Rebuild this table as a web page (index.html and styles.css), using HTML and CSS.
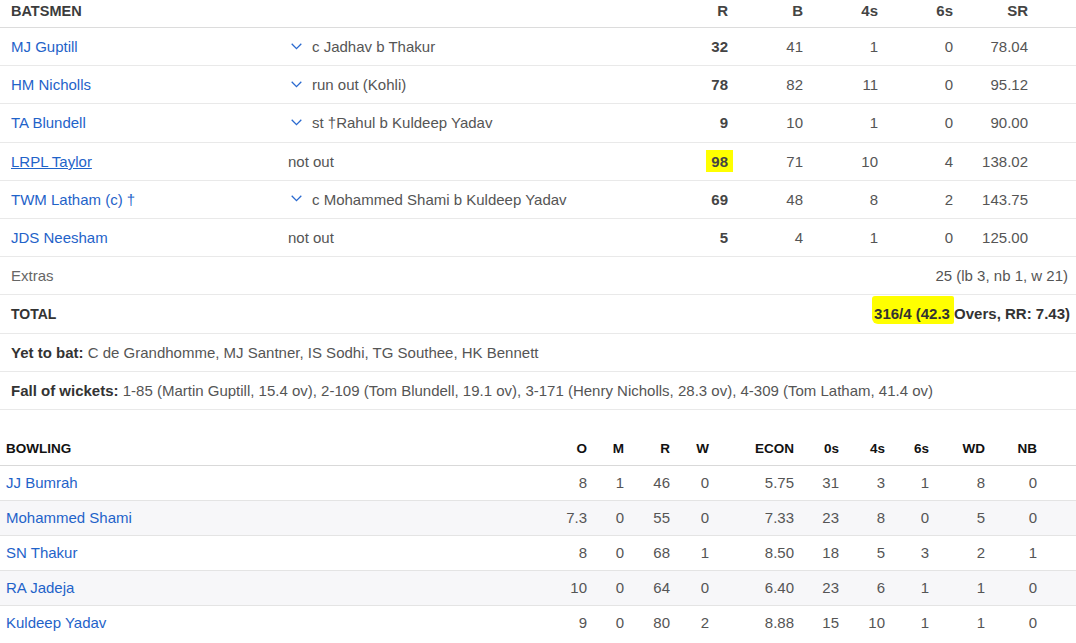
FILE: index.html
```html
<!DOCTYPE html>
<html lang="en">
<head>
<meta charset="utf-8">
<title>Scorecard</title>
<link rel="stylesheet" href="styles.css">
</head>
<body>
<section class="batting">
  <div class="bat-row bat-head">
    <div class="bat-title">BATSMEN</div>
    <div></div>
    <div class="num">R</div>
    <div class="num">B</div>
    <div class="num">4s</div>
    <div class="num">6s</div>
    <div class="num">SR</div>
  </div>

  <div class="bat-row">
    <a class="player" href="#">MJ Guptill</a>
    <div class="dismissal"><svg class="chev" width="11" height="7" viewBox="0 0 11 7"><path d="M0.7 0.8 L5.5 5.6 L10.3 0.8" fill="none" stroke="#2a6ad0" stroke-width="1.3"/></svg>c Jadhav b Thakur</div>
    <div class="num runs">32</div>
    <div class="num">41</div>
    <div class="num">1</div>
    <div class="num">0</div>
    <div class="num">78.04</div>
  </div>

  <div class="bat-row">
    <a class="player" href="#">HM Nicholls</a>
    <div class="dismissal"><svg class="chev" width="11" height="7" viewBox="0 0 11 7"><path d="M0.7 0.8 L5.5 5.6 L10.3 0.8" fill="none" stroke="#2a6ad0" stroke-width="1.3"/></svg>run out (Kohli)</div>
    <div class="num runs">78</div>
    <div class="num">82</div>
    <div class="num">11</div>
    <div class="num">0</div>
    <div class="num">95.12</div>
  </div>

  <div class="bat-row">
    <a class="player" href="#">TA Blundell</a>
    <div class="dismissal"><svg class="chev" width="11" height="7" viewBox="0 0 11 7"><path d="M0.7 0.8 L5.5 5.6 L10.3 0.8" fill="none" stroke="#2a6ad0" stroke-width="1.3"/></svg>st †Rahul b Kuldeep Yadav</div>
    <div class="num runs">9</div>
    <div class="num">10</div>
    <div class="num">1</div>
    <div class="num">0</div>
    <div class="num">90.00</div>
  </div>

  <div class="bat-row">
    <a class="player hover" href="#">LRPL Taylor</a>
    <div class="dismissal">not out</div>
    <div class="num runs"><span class="hl">98</span></div>
    <div class="num">71</div>
    <div class="num">10</div>
    <div class="num">4</div>
    <div class="num">138.02</div>
  </div>

  <div class="bat-row">
    <a class="player" href="#">TWM Latham (c) †</a>
    <div class="dismissal"><svg class="chev" width="11" height="7" viewBox="0 0 11 7"><path d="M0.7 0.8 L5.5 5.6 L10.3 0.8" fill="none" stroke="#2a6ad0" stroke-width="1.3"/></svg>c Mohammed Shami b Kuldeep Yadav</div>
    <div class="num runs">69</div>
    <div class="num">48</div>
    <div class="num">8</div>
    <div class="num">2</div>
    <div class="num">143.75</div>
  </div>

  <div class="bat-row">
    <a class="player" href="#">JDS Neesham</a>
    <div class="dismissal">not out</div>
    <div class="num runs">5</div>
    <div class="num">4</div>
    <div class="num">1</div>
    <div class="num">0</div>
    <div class="num">125.00</div>
  </div>

  <div class="line-row extras">
    <div class="extras-label">Extras</div>
    <div class="extras-value">25 (lb 3, nb 1, w 21)</div>
  </div>

  <div class="line-row total">
    <div class="total-label">TOTAL</div>
    <div class="total-value"><span class="marker">316/4 (42.3 </span>Overs, RR: 7.43)</div>
  </div>

  <div class="line-row note">
    <div><b>Yet to bat:</b> C de Grandhomme, MJ Santner, IS Sodhi, TG Southee, HK Bennett</div>
  </div>

  <div class="line-row note">
    <div><b>Fall of wickets:</b> 1-85 (Martin Guptill, 15.4 ov), 2-109 (Tom Blundell, 19.1 ov), 3-171 (Henry Nicholls, 28.3 ov), 4-309 (Tom Latham, 41.4 ov)</div>
  </div>
</section>

<section class="bowling">
  <div class="bowl-row bowl-head">
    <div>BOWLING</div>
    <div class="num">O</div>
    <div class="num">M</div>
    <div class="num">R</div>
    <div class="num">W</div>
    <div class="num">ECON</div>
    <div class="num">0s</div>
    <div class="num">4s</div>
    <div class="num">6s</div>
    <div class="num">WD</div>
    <div class="num">NB</div>
  </div>

  <div class="bowl-row">
    <a class="player" href="#">JJ Bumrah</a>
    <div class="num">8</div><div class="num">1</div><div class="num">46</div><div class="num">0</div>
    <div class="num">5.75</div><div class="num">31</div><div class="num">3</div><div class="num">1</div>
    <div class="num">8</div><div class="num">0</div>
  </div>

  <div class="bowl-row stripe">
    <a class="player" href="#">Mohammed Shami</a>
    <div class="num">7.3</div><div class="num">0</div><div class="num">55</div><div class="num">0</div>
    <div class="num">7.33</div><div class="num">23</div><div class="num">8</div><div class="num">0</div>
    <div class="num">5</div><div class="num">0</div>
  </div>

  <div class="bowl-row">
    <a class="player" href="#">SN Thakur</a>
    <div class="num">8</div><div class="num">0</div><div class="num">68</div><div class="num">1</div>
    <div class="num">8.50</div><div class="num">18</div><div class="num">5</div><div class="num">3</div>
    <div class="num">2</div><div class="num">1</div>
  </div>

  <div class="bowl-row stripe">
    <a class="player" href="#">RA Jadeja</a>
    <div class="num">10</div><div class="num">0</div><div class="num">64</div><div class="num">0</div>
    <div class="num">6.40</div><div class="num">23</div><div class="num">6</div><div class="num">1</div>
    <div class="num">1</div><div class="num">0</div>
  </div>

  <div class="bowl-row last">
    <a class="player" href="#">Kuldeep Yadav</a>
    <div class="num">9</div><div class="num">0</div><div class="num">80</div><div class="num">2</div>
    <div class="num">8.88</div><div class="num">15</div><div class="num">10</div><div class="num">1</div>
    <div class="num">1</div><div class="num">0</div>
  </div>
</section>
</body>
</html>
```

FILE: styles.css
```css
html, body {
  margin: 0;
  padding: 0;
  background: #ffffff;
}

body {
  font-family: "Liberation Sans", Arial, sans-serif;
  font-size: 15px;
  color: #555555;
  width: 1076px;
  overflow: hidden;
}

.num {
  text-align: right;
  white-space: nowrap;
}

.player {
  color: #1f63c9;
  text-decoration: none;
  white-space: nowrap;
}

.player.hover {
  text-decoration: underline;
}

/* ---------- Batting ---------- */
.bat-row {
  display: grid;
  grid-template-columns: 277px 365px repeat(5, 75px) 1fr;
  align-items: center;
  padding-left: 11px;
  height: 38.2px;
  box-sizing: border-box;
  border-bottom: 1px solid #e9e9e9;
}

.bat-head {
  height: 28px;
  align-items: start;
  padding-top: 1px;
  border-bottom: 1px solid #dcdcdc;
  font-weight: bold;
  color: #444444;
  line-height: 20px;
}

.bat-title {
  font-size: 14.5px;
  color: #3c3c3c;
}

.dismissal {
  display: flex;
  align-items: center;
  white-space: nowrap;
}

.chev {
  margin: -1px 10px 0 3px;
  flex: none;
}

.runs {
  font-weight: bold;
  color: #444444;
}

.hl {
  background: #ffff00;
  display: inline-block;
  padding: 3px 5px 2px;
  margin: 0 -5px 0 0;
  line-height: 17px;
}

.line-row {
  display: flex;
  align-items: center;
  justify-content: space-between;
  padding-left: 11px;
  height: 38.2px;
  box-sizing: border-box;
  border-bottom: 1px solid #e9e9e9;
  white-space: nowrap;
}

.extras {
  padding-right: 8px;
}

.extras-label {
  color: #666666;
}

.total {
  padding-right: 6px;
  font-weight: bold;
  color: #333333;
}

.total-label {
  font-size: 14px;
}

.marker {
  background: #ffff00;
  padding: 9px 0 2px 2px;
  margin-left: -2px;
  border-radius: 3px 2px 2px 6px;
}

.note b {
  color: #333333;
}

/* ---------- Bowling ---------- */
.bowling {
  margin-top: 23px;
}

.bowl-row {
  display: grid;
  grid-template-columns: 531px 50px 37px 46px 39px 85px 45px 46px 44px 56px 52px 1fr;
  align-items: center;
  padding-left: 6px;
  height: 35px;
  box-sizing: border-box;
  border-bottom: 1px solid #e4e4e4;
}

.bowl-row.last {
  border-bottom-color: transparent;
}

.bowl-head {
  height: 33px;
  font-size: 13.5px;
  font-weight: bold;
  color: #111111;
  border-bottom: 1px solid #d9d9d9;
}

.stripe {
  background: #f7f7f9;
}
```
